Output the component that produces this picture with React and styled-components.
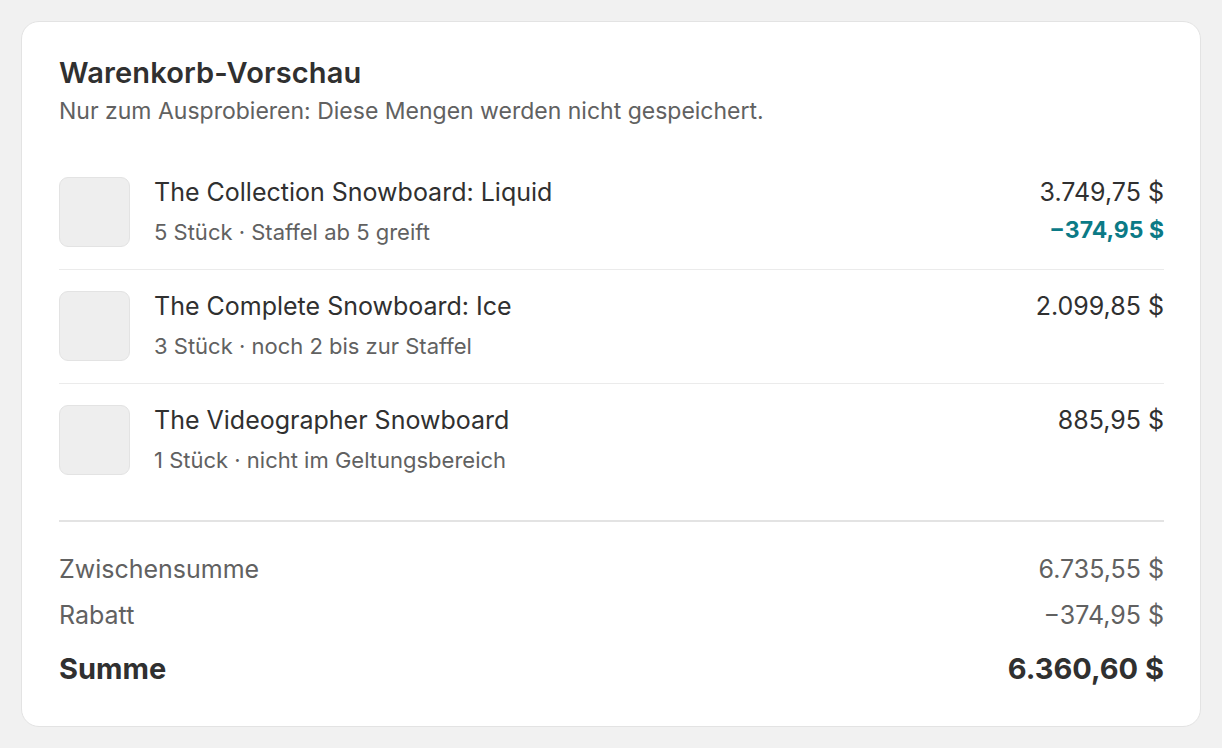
import React from "react";
import styled, { createGlobalStyle } from "styled-components";

const Global = createGlobalStyle`
  html, body { margin: 0; padding: 0; background: #f1f1f1; }
  body { font-family: Inter, "Noto Sans", sans-serif; color: #303030; }
  * { box-sizing: border-box; }
`;

const Page = styled.div`
  padding: 21px 21px;
`;

const Card = styled.section`
  background: #fff;
  border: 1px solid #e3e3e3;
  border-radius: 18px;
  padding: 36px 36px 40px 37px;
`;

const Title = styled.h2`
  margin: 0;
  font-size: 29px;
  line-height: 30px;
  font-weight: 600;
  letter-spacing: 0.15px;
  color: #303030;
`;

const Subtitle = styled.p`
  margin: 9px 0 0;
  font-size: 23px;
  line-height: 28px;
  color: #616161;
`;

const List = styled.div`
  margin-top: 31px;
`;

const Row = styled.div`
  display: flex;
  align-items: flex-start;
  gap: 24px;
  padding: 21px 0 22px;
  border-bottom: ${(p) => (p.$last ? "none" : "1px solid #ebebeb")};
`;

const Thumb = styled.div`
  width: 71px;
  height: 70px;
  flex: none;
  background: #eeeeee;
  border: 1px solid #e3e3e3;
  border-radius: 9px;
`;

const Info = styled.div`
  flex: 1;
  display: flex;
  flex-direction: column;
`;

const Name = styled.div`
  font-size: 25px;
  line-height: 31px;
  color: #303030;
`;

const Meta = styled.div`
  margin-top: 11px;
  font-size: 22px;
  line-height: 27px;
  color: #616161;
`;

const Prices = styled.div`
  display: flex;
  flex-direction: column;
  align-items: flex-end;
`;

const Price = styled.div`
  font-size: 25px;
  line-height: 31px;
  color: #303030;
`;

const Discount = styled.div`
  margin-top: 9px;
  font-size: 23px;
  line-height: 26px;
  font-weight: 700;
  color: #0b7a86;
`;

const Divider = styled.hr`
  margin: 23px 0 0;
  border: none;
  height: 2px;
  background: #e3e3e3;
`;

const Totals = styled.div`
  display: flex;
  flex-direction: column;
  gap: 16px;
  padding-top: 32px;
`;

const TotalRow = styled.div`
  display: flex;
  justify-content: space-between;
  align-items: center;
  font-size: ${(p) => (p.$grand ? "29px" : "25px")};
  line-height: ${(p) => (p.$grand ? "34px" : "30px")};
  font-weight: ${(p) => (p.$grand ? 700 : 400)};
  color: ${(p) => (p.$grand ? "#303030" : "#616161")};
  margin-top: ${(p) => (p.$grand ? "6px" : "0")};
`;

const items = [
  { name: "The Collection Snowboard: Liquid", meta: "5 Stück · Staffel ab 5 greift", price: "3.749,75 $", discount: "−374,95 $" },
  { name: "The Complete Snowboard: Ice", meta: "3 Stück · noch 2 bis zur Staffel", price: "2.099,85 $" },
  { name: "The Videographer Snowboard", meta: "1 Stück · nicht im Geltungsbereich", price: "885,95 $" },
];

export default function App() {
  return (
    <Page>
      <Global />
      <Card>
        <Title>Warenkorb-Vorschau</Title>
        <Subtitle>Nur zum Ausprobieren: Diese Mengen werden nicht gespeichert.</Subtitle>
        <List>
          {items.map((it, i) => (
            <Row key={it.name} $last={i === items.length - 1}>
              <Thumb />
              <Info>
                <Name>{it.name}</Name>
                <Meta>{it.meta}</Meta>
              </Info>
              <Prices>
                <Price>{it.price}</Price>
                {it.discount && <Discount>{it.discount}</Discount>}
              </Prices>
            </Row>
          ))}
        </List>
        <Divider />
        <Totals>
          <TotalRow><span>Zwischensumme</span><span>6.735,55 $</span></TotalRow>
          <TotalRow><span>Rabatt</span><span>−374,95 $</span></TotalRow>
          <TotalRow $grand><span>Summe</span><span>6.360,60 $</span></TotalRow>
        </Totals>
      </Card>
    </Page>
  );
}
